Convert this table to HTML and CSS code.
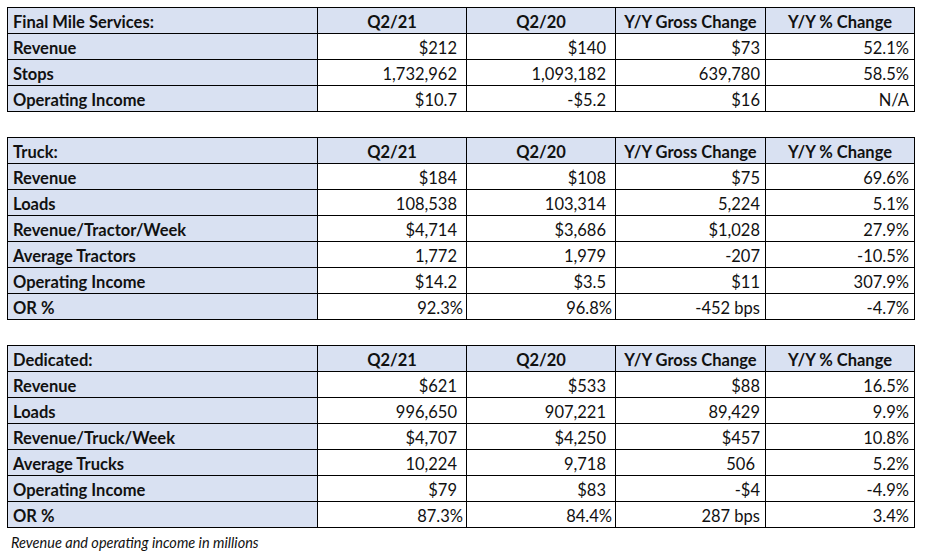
FILE: index.html
```html
<!DOCTYPE html>
<html>
<head>
<meta charset="utf-8">
<link rel="stylesheet" href="styles.css">
</head>
<body>
<div class="sheet">
  <table class="grid">
    <colgroup><col class="c-label"><col class="c-q"><col class="c-q"><col class="c-gross"><col class="c-pct"></colgroup>
    <tr class="head"><td class="label">Final Mile Services:</td><td>Q2/21</td><td>Q2/20</td><td>Y/Y Gross Change</td><td>Y/Y % Change</td></tr>
    <tr><td class="label">Revenue</td><td class="n">$212</td><td class="n">$140</td><td class="g">$73</td><td class="p">52.1%</td></tr>
    <tr><td class="label">Stops</td><td class="n">1,732,962</td><td class="n">1,093,182</td><td class="g">639,780</td><td class="p">58.5%</td></tr>
    <tr><td class="label">Operating Income</td><td class="n">$10.7</td><td class="n">-$5.2</td><td class="g">$16</td><td class="p">N/A</td></tr>
  </table>

  <table class="grid spaced">
    <colgroup><col class="c-label"><col class="c-q"><col class="c-q"><col class="c-gross"><col class="c-pct"></colgroup>
    <tr class="head"><td class="label">Truck:</td><td>Q2/21</td><td>Q2/20</td><td>Y/Y Gross Change</td><td>Y/Y % Change</td></tr>
    <tr><td class="label">Revenue</td><td class="n">$184</td><td class="n">$108</td><td class="g">$75</td><td class="p">69.6%</td></tr>
    <tr><td class="label">Loads</td><td class="n">108,538</td><td class="n">103,314</td><td class="g">5,224</td><td class="p">5.1%</td></tr>
    <tr><td class="label">Revenue/Tractor/Week</td><td class="n">$4,714</td><td class="n">$3,686</td><td class="g">$1,028</td><td class="p">27.9%</td></tr>
    <tr><td class="label">Average Tractors</td><td class="n">1,772</td><td class="n">1,979</td><td class="g">-207</td><td class="p">-10.5%</td></tr>
    <tr><td class="label">Operating Income</td><td class="n">$14.2</td><td class="n">$3.5</td><td class="g">$11</td><td class="p">307.9%</td></tr>
    <tr><td class="label">OR %</td><td class="pq">92.3%</td><td class="pq">96.8%</td><td class="g">-452 bps</td><td class="p">-4.7%</td></tr>
  </table>

  <table class="grid spaced">
    <colgroup><col class="c-label"><col class="c-q"><col class="c-q"><col class="c-gross"><col class="c-pct"></colgroup>
    <tr class="head"><td class="label">Dedicated:</td><td>Q2/21</td><td>Q2/20</td><td>Y/Y Gross Change</td><td>Y/Y % Change</td></tr>
    <tr><td class="label">Revenue</td><td class="n">$621</td><td class="n">$533</td><td class="g">$88</td><td class="p">16.5%</td></tr>
    <tr><td class="label">Loads</td><td class="n">996,650</td><td class="n">907,221</td><td class="g">89,429</td><td class="p">9.9%</td></tr>
    <tr><td class="label">Revenue/Truck/Week</td><td class="n">$4,707</td><td class="n">$4,250</td><td class="g">$457</td><td class="p">10.8%</td></tr>
    <tr><td class="label">Average Trucks</td><td class="n">10,224</td><td class="n">9,718</td><td class="g wide">506</td><td class="p">5.2%</td></tr>
    <tr><td class="label">Operating Income</td><td class="n">$79</td><td class="n">$83</td><td class="g">-$4</td><td class="p">-4.9%</td></tr>
    <tr><td class="label">OR %</td><td class="pq">87.3%</td><td class="pq">84.4%</td><td class="g">287 bps</td><td class="p">3.4%</td></tr>
  </table>

  <p class="note">Revenue and operating income in millions</p>
</div>
</body>
</html>
```

FILE: styles.css
```css
html, body {
  margin: 0;
  padding: 0;
  background: #ffffff;
}

.sheet {
  padding: 7px 0 0 7px;
  font-family: Lato, "Liberation Sans", sans-serif;
  font-size: 16.5px;
  color: #111111;
}

.grid {
  border-collapse: collapse;
  table-layout: fixed;
  width: 907px;
}

.spaced {
  margin-top: 25px;
}

.c-label { width: 310px; }
.c-q { width: 149px; }
.c-gross { width: 150px; }
.c-pct { width: 149px; }

.grid td {
  border: 1px solid #000000;
  height: 26px;
  box-sizing: border-box;
  padding: 0 5px 2px 5px;
  line-height: 18px;
  vertical-align: bottom;
  white-space: nowrap;
  text-align: right;
  background: #ffffff;
}

.grid td.label {
  text-align: left;
  font-weight: 700;
  background: #d9e1f2;
}

.grid tr.head td {
  background: #d9e1f2;
  font-weight: 700;
  text-align: center;
}

.grid tr.head td.label {
  text-align: left;
}

.grid td.n { padding-right: 9px; }
.grid td.pq { padding-right: 3px; }
.grid td.g { padding-right: 5px; }
.grid td.g.wide { padding-right: 10px; }
.grid td.p { padding-right: 5px; }

.note {
  margin: 0;
  padding: 6px 0 0 4px;
  font-style: italic;
  line-height: 17px;
  font-size: 14.5px;
}
```
